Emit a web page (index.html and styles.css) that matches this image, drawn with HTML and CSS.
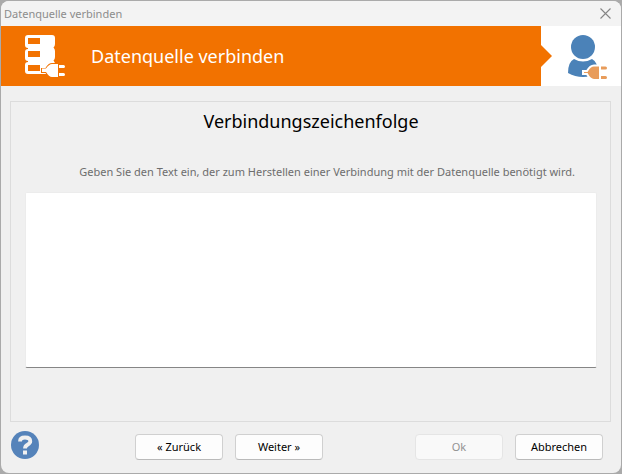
FILE: index.html
```
<!DOCTYPE html>
<html lang="de">
<head>
    <meta charset="UTF-8">
    <meta name="viewport" content="width=device-width, initial-scale=1.0">
    <title>Datenquelle verbinden</title>
    <link rel="stylesheet" href="styles.css">
</head>
<body>
    <form class="dialog">
        <div class="titlebar">
            <span>Datenquelle verbinden</span>
            <button type="button" class="close" aria-label="Schließen">
                <svg width="11" height="11" viewBox="0 0 11 11"><path d="M.5 .5L10.500 10.500M10.500 .5L.5 10.500" stroke="#858585" stroke-width="1.100"/></svg>
            </button>
        </div>
        <header class="banner">
            <div class="banner-main">
                <svg class="database" width="42" height="44" viewBox="1 1 42 44">
                    <path fill="#fff" d="M4 2H28Q31 2 31 5V11Q31 13 29.500 14.500Q31 16 31 18V24Q31 26 29.500 27.500Q31 29 31 31V41H4Q1 41 1 38V32Q1 29 4 29V28Q1 28 1 25V19Q1 16 4 16V15Q1 15 1 12V5Q1 2 4 2Z"/>
                    <path fill="#f27200" d="M4 5H16V11H4ZM4 18H16V24H4ZM4 32H16V38H4Z"/>
                    <path d="M18 36H22Q25 31 28 31H34V44H28Q25 44 22 39H18Z" fill="#fff" stroke="#f27200" stroke-width="2"/>
                    <path fill="#fff" d="M18 35.500H22Q25 31 28 31H34V44H28Q25 44 22 39H18ZM34 32H39.500Q41 32 41 33.500Q41 35 39.500 35H34ZM34 40H39.500Q41 40 41 41.500Q41 43 39.500 43H34Z"/>
                    <path d="M34.500 31V44" stroke="#f27200"/>
                </svg>
                <h1>Datenquelle verbinden</h1>
            </div>
            <div class="banner-user">
                <svg class="arrow" width="11" height="22" viewBox="0 0 11 22"><path d="M0 0L11 11L0 22Z" fill="#f27200"/></svg>
                <svg width="41" height="50" viewBox="0 -4 41 50">
                    <circle cx="15" cy="12" r="12" fill="#4b82b8"/>
                    <path d="M6 24Q15 29 24 24Q30 27 30 38Q23 42 15 42Q7 42 0 38Q0 27 6 24Z" fill="#4b82b8"/>
                    <path d="M15 36H19Q22 30.500 26 30.500H32V45H26Q22 45 19 39H15Z" fill="#e89c5b" stroke="#fff" stroke-width="2"/>
                    <path d="M33 31.500H37.500Q39 31.500 39 33Q39 34.500 37.500 34.500H33ZM33 41H37.500Q39 41 39 42.500Q39 44 37.500 44H33Z" fill="#e89c5b"/>
                </svg>
            </div>
        </header>
        <main class="panel">
            <h2>Verbindungszeichenfolge</h2>
            <label for="connection">Geben Sie den Text ein, der zum Herstellen einer Verbindung mit der Datenquelle benötigt wird.</label>
            <textarea id="connection"></textarea>
        </main>
        <footer class="actions">
            <button type="button" class="help" aria-label="Hilfe">
                <svg width="28" height="28" viewBox="0 0 28 28">
                    <circle cx="14" cy="14" r="14" fill="#5583ba"/>
                    <path d="M9 10.500Q9 6.500 14 6.500Q19.300 6.500 19.300 10.300Q19.300 12.300 16.500 13.700Q14 15 14 17.500" fill="none" stroke="#f0f0f0" stroke-width="3.800"/>
                    <path d="M12 19.500H16V23.500H12Z" fill="#f0f0f0"/>
                </svg>
            </button>
            <div class="group">
                <button type="button" class="btn">« Zurück</button>
                <button type="button" class="btn">Weiter »</button>
            </div>
            <div class="group group-end">
                <button type="submit" class="btn" disabled>Ok</button>
                <button type="button" class="btn">Abbrechen</button>
            </div>
        </footer>
    </form>
</body>
</html>
```
FILE: styles.css
```
* {
    box-sizing: border-box;
}

body {
    margin: 0;
    padding: 1px;
    height: 100vh;
    background: #aaa;
    font-family: "Noto Sans", "Open Sans", sans-serif;
    font-size: 11px;
    line-height: 16px;
    color: #000;
}

.dialog {
    display: flex;
    flex-direction: column;
    height: 100%;
    background: #f0f0f0;
    border-radius: 8px;
    overflow: hidden;
}

.titlebar {
    display: flex;
    flex: none;
    align-items: center;
    justify-content: space-between;
    height: 25px;
    padding: 0 10px 0 3px;
    background: #f3f3f3;
    color: #8c8c8c;
}

.close, .help {
    display: flex;
    padding: 0;
    border: none;
    background: none;
}

.banner {
    display: flex;
    flex: none;
    height: 60px;
}

.banner-main {
    display: flex;
    flex: 1;
    align-items: center;
    gap: 24px;
    padding-left: 24px;
    background: #f27200;
    color: #fff;
}

.banner-user {
    display: flex;
    align-items: center;
    gap: 16px;
    width: 80px;
    background: #fff;
}

h1, h2 {
    margin: 0;
    font-size: 18px;
    font-weight: 400;
    line-height: 24px;
}

.panel {
    display: flex;
    flex: 1;
    flex-direction: column;
    margin: 15px 10px 0 9px;
    padding: 7px 13px 53px 14px;
    border: 1px solid #dcdcdc;
}

h2 {
    text-align: center;
}

.panel label {
    margin: 31px 0 12px;
    padding-right: 22px;
    text-align: right;
    color: #6d6d6d;
}

.panel textarea {
    flex: 1;
    width: 100%;
    padding: 4px;
    border: 1px solid #ececec;
    border-bottom-color: #868686;
    border-radius: 2px;
    background: #fff;
    font: inherit;
    resize: none;
}

.actions {
    display: flex;
    flex: none;
    align-items: center;
    height: 51px;
    padding: 0 18px 1px 10px;
}

.help {
    margin-bottom: 4px;
}

.group {
    display: flex;
    gap: 12px;
    margin-left: 96px;
}

.group-end {
    margin-left: auto;
}

.btn {
    width: 88px;
    height: 26px;
    padding: 0;
    border: 1px solid #d0d0d0;
    border-bottom-color: #bababa;
    border-radius: 4px;
    background: #fdfdfd;
    font: inherit;
    color: #000;
}

.btn:disabled {
    border-color: #e5e5e5;
    background: #f9f9f9;
    color: #929292;
}
```
